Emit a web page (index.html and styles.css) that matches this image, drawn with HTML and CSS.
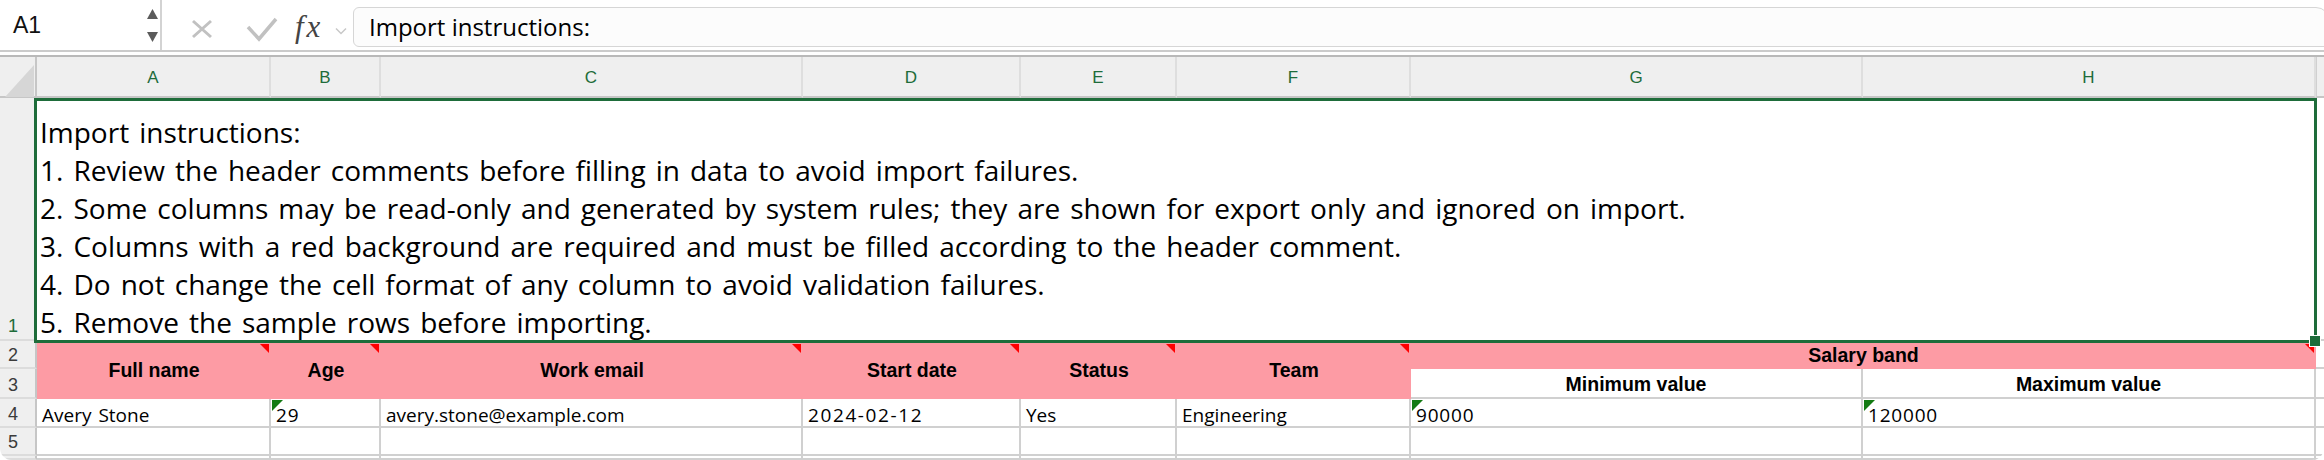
FILE: index.html
```html
<!DOCTYPE html>
<html lang="en">
<head>
<meta charset="UTF-8">
<meta name="viewport" content="width=device-width, initial-scale=1.0">
<title>Import template</title>
<link rel="stylesheet" href="styles.css">
</head>
<body>
  <div class="window">
    <div class="formula-bar">
      <div class="name-box">
        <span class="cell-ref">A1</span>
        <svg class="spinner" viewBox="0 0 11 50" width="11" height="50">
          <polygon points="0,19 11,19 5.5,9" />
          <polygon points="0,32 11,32 5.5,42" />
        </svg>
      </div>
      <svg class="tool-cancel" viewBox="0 0 22 20" width="22" height="20">
        <path d="M2 2 L20 18 M20 2 L2 18" />
      </svg>
      <svg class="tool-enter" viewBox="0 0 32 26" width="32" height="26">
        <polyline points="2,11 13,23 30,3" />
      </svg>
      <span class="fx">fx</span>
      <svg class="tool-more" viewBox="0 0 12 8" width="12" height="8">
        <polyline points="1,1.5 6,6.5 11,1.5" />
      </svg>
      <div class="formula-input">Import instructions:</div>
    </div>

    <div class="sheet">
      <!-- column headers -->
      <div class="corner">
        <svg viewBox="0 0 37 41" width="37" height="41"><polygon points="5,40 34,40 34,8" /></svg>
      </div>
      <div class="col-head">A</div>
      <div class="col-head">B</div>
      <div class="col-head">C</div>
      <div class="col-head">D</div>
      <div class="col-head">E</div>
      <div class="col-head">F</div>
      <div class="col-head">G</div>
      <div class="col-head">H</div>
      <div class="col-head stub"></div>

      <!-- row 1 -->
      <div class="row-head active">1</div>
      <div class="cell notes">
        Import instructions:<br>
        1. Review the header comments before filling in data to avoid import failures.<br>
        2. Some columns may be read-only and generated by system rules; they are shown for export only and ignored on import.<br>
        3. Columns with a red background are required and must be filled according to the header comment.<br>
        4. Do not change the cell format of any column to avoid validation failures.<br>
        5. Remove the sample rows before importing.
        <span class="selection"></span>
        <span class="fill-handle"></span>
      </div>
      <div class="cell stub"></div>

      <!-- rows 2-3 -->
      <div class="row-head">2</div>
      <div class="cell head tall">Full name<span class="note-mark"></span></div>
      <div class="cell head tall">Age<span class="note-mark"></span></div>
      <div class="cell head tall">Work email<span class="note-mark"></span></div>
      <div class="cell head tall">Start date<span class="note-mark"></span></div>
      <div class="cell head tall">Status<span class="note-mark"></span></div>
      <div class="cell head tall">Team<span class="note-mark"></span></div>
      <div class="cell head wide">Salary band<span class="note-mark"></span></div>
      <div class="cell stub"></div>

      <div class="row-head">3</div>
      <div class="cell sub-head">Minimum value</div>
      <div class="cell sub-head">Maximum value</div>
      <div class="cell stub"></div>

      <!-- row 4 -->
      <div class="row-head">4</div>
      <div class="cell">Avery Stone</div>
      <div class="cell num"><span class="text-mark"></span>29</div>
      <div class="cell">avery.stone@example.com</div>
      <div class="cell date">2024-02-12</div>
      <div class="cell">Yes</div>
      <div class="cell">Engineering</div>
      <div class="cell num"><span class="text-mark"></span>90000</div>
      <div class="cell num"><span class="text-mark"></span>120000</div>
      <div class="cell stub"></div>

      <!-- row 5 -->
      <div class="row-head">5</div>
      <div class="cell"></div>
      <div class="cell"></div>
      <div class="cell"></div>
      <div class="cell"></div>
      <div class="cell"></div>
      <div class="cell"></div>
      <div class="cell"></div>
      <div class="cell"></div>
      <div class="cell stub"></div>

      <!-- row 6 (cut off) -->
      <div class="row-head"></div>
      <div class="cell"></div>
      <div class="cell"></div>
      <div class="cell"></div>
      <div class="cell"></div>
      <div class="cell"></div>
      <div class="cell"></div>
      <div class="cell"></div>
      <div class="cell"></div>
      <div class="cell stub"></div>
    </div>
  </div>
</body>
</html>
```

FILE: styles.css
```css
* {
  margin: 0;
  padding: 0;
  box-sizing: border-box;
}

body {
  background-color: #fff;
  font-family: 'Open Sans', 'Liberation Sans', sans-serif;
  color: #000;
}

.window {
  width: 2324px;
  height: 460px;
  overflow: hidden;
  background-color: #fff;
  border-radius: 0 0 12px 12px;
}

/* Formula bar */
.formula-bar {
  display: flex;
  align-items: flex-start;
  height: 52px;
  border-bottom: 2px solid #cbcbcb;
}

.name-box {
  display: flex;
  justify-content: space-between;
  align-items: center;
  width: 162px;
  height: 50px;
  padding: 0 2px 0 13px;
  border-right: 2px solid #d3d3d3;
}

.cell-ref {
  font-family: 'Liberation Sans', Arial, sans-serif;
  font-size: 23px;
  color: #111;
}

.spinner polygon {
  fill: #5b5b5b;
}

.tool-cancel {
  margin: 19px 0 0 29px;
}

.tool-cancel path {
  stroke: #c1c1c1;
  stroke-width: 3;
  fill: none;
}

.tool-enter {
  margin: 16px 0 0 33px;
}

.tool-enter polyline {
  stroke: #c1c1c1;
  stroke-width: 3.5;
  fill: none;
}

.fx {
  display: block;
  width: 28px;
  margin: 2px 0 0 17px;
  font-family: 'Liberation Serif', 'Times New Roman', serif;
  font-style: italic;
  font-size: 31px;
  letter-spacing: 3px;
  line-height: 50px;
  color: #444;
}

.tool-more {
  margin: 27px 0 0 12px;
}

.tool-more polyline {
  stroke: #c8c8c8;
  stroke-width: 1.5;
  fill: none;
}

.formula-input {
  flex: 1;
  height: 40px;
  margin: 7px -6px 0 6px;
  padding-left: 15px;
  background-color: #fcfcfc;
  border: 1px solid #d6d6d6;
  border-radius: 6px 14px 0 6px;
  font-size: 24px;
  line-height: 38px;
}

/* Sheet grid */
.sheet {
  display: grid;
  grid-template-columns: 37px 234px 110px 422px 218px 156px 234px 452px 453px 1fr;
  grid-template-rows: 41px 243px 28px 30px 29px 28px 1fr;
  height: 405px;
  margin-top: 3px;
  border-top: 2px solid #b9b9b9;
}

.corner {
  background-color: #efefef;
  border-right: 2px solid #c6c6c6;
  border-bottom: 2px solid #c6c6c6;
}

.corner svg {
  display: block;
}

.corner polygon {
  fill: #d6d6d6;
}

.col-head {
  display: flex;
  align-items: center;
  justify-content: center;
  background-color: #efefef;
  border-right: 2px solid #dedede;
  border-bottom: 2px solid #c6c6c6;
  font-family: 'Liberation Sans', Arial, sans-serif;
  font-size: 17px;
  color: #1e6c3a;
  padding-top: 2px;
}

.col-head.stub {
  border-right: none;
  border-left: 1px solid #d0d0d0;
}

.row-head {
  display: flex;
  align-items: flex-end;
  padding: 0 0 2px 8px;
  background-color: #efefef;
  border-right: 2px solid #c6c6c6;
  border-bottom: 2px solid #dcdcdc;
  font-family: 'Liberation Sans', Arial, sans-serif;
  font-size: 18px;
  line-height: 20px;
  color: #3b3b3b;
}

.row-head.active {
  color: #1e6c3a;
  padding-bottom: 3px;
}

.cell {
  position: relative;
  display: flex;
  align-items: flex-end;
  padding: 0 0 1px 5px;
  border-right: 2px solid #d0d0d0;
  border-bottom: 2px solid #d0d0d0;
  font-size: 19px;
  line-height: 20px;
  word-spacing: 2px;
  white-space: nowrap;
}

.cell.stub {
  border-right: none;
}

.cell.num {
  letter-spacing: 0.8px;
}

.cell.date {
  letter-spacing: 1.6px;
}

/* Merged instructions cell */
.cell.notes {
  grid-column: span 8;
  display: block;
  padding: 15px 0 0 3px;
  border: none;
  font-size: 28px;
  line-height: 38px;
  word-spacing: 2.8px;
}

.selection {
  position: absolute;
  top: 0;
  right: -1px;
  bottom: -2px;
  left: -3px;
  border: 3px solid #1e6c3a;
  z-index: 2;
}

.fill-handle {
  position: absolute;
  right: -4px;
  bottom: -5px;
  width: 10px;
  height: 10px;
  background-color: #1e6c3a;
  box-shadow: 0 0 0 1px #fff;
  z-index: 3;
}

/* Required header cells */
.cell.head,
.cell.sub-head {
  align-items: center;
  justify-content: center;
  padding: 0;
  font-family: 'Liberation Sans', Arial, sans-serif;
  font-weight: bold;
  font-size: 19.5px;
  word-spacing: 0;
}

.cell.head {
  background-color: #fd9ba4;
  border: none;
}

.cell.head.tall {
  grid-row: span 2;
}

.cell.head.wide {
  grid-column: span 2;
}

.cell.sub-head {
  padding-top: 1px;
}

.note-mark {
  position: absolute;
  top: 3px;
  right: 2px;
  width: 9px;
  height: 9px;
  background-color: #ff0000;
  clip-path: polygon(0 0, 100% 0, 100% 100%);
}

.text-mark {
  position: absolute;
  top: 1px;
  left: 1px;
  width: 11px;
  height: 11px;
  background-color: #127a12;
  clip-path: polygon(0 0, 100% 0, 0 100%);
}
```
